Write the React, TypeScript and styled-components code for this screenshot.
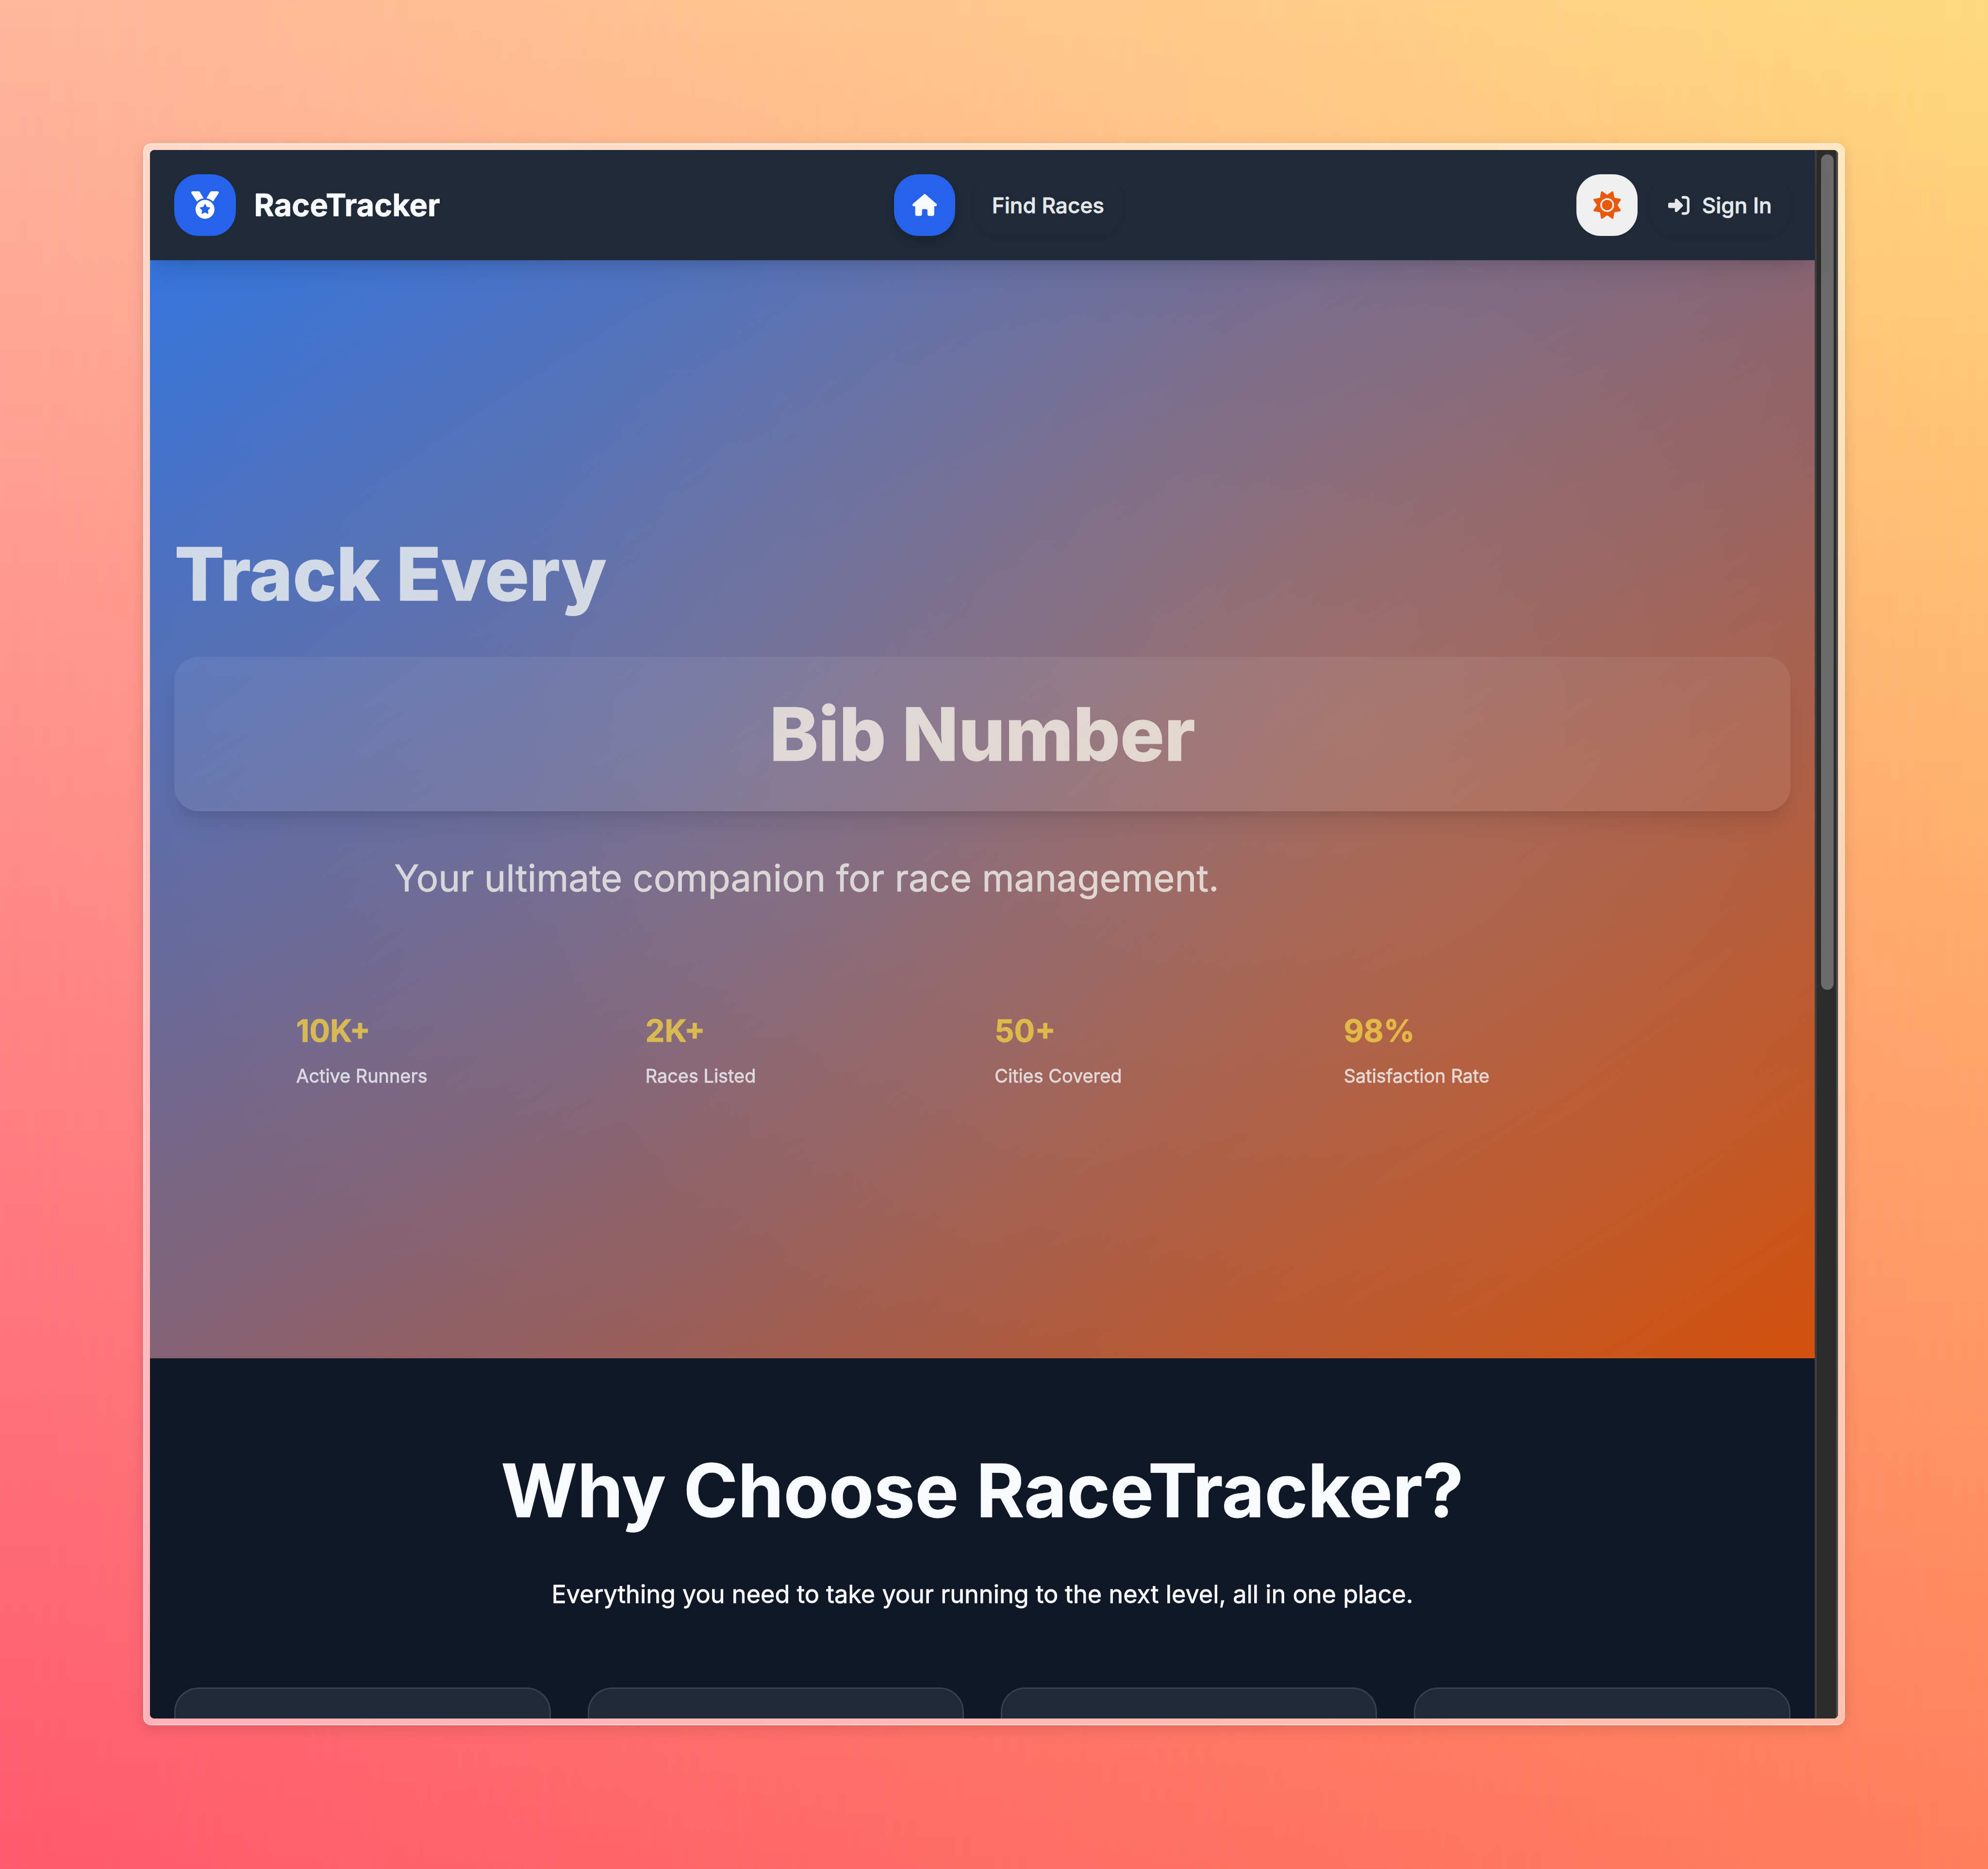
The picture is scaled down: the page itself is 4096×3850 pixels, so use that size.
import React from 'react';
import styled, { createGlobalStyle } from 'styled-components';
import { FaHouse, FaMedal, FaRightToBracket, FaSun } from 'react-icons/fa6';

const GlobalStyle = createGlobalStyle`
  *, *::before, *::after { box-sizing: border-box; }
  html { font-size: 50.49px; }
  body {
    margin: 0;
    font-family: Inter, "Liberation Sans", sans-serif;
    overflow: hidden;
    -webkit-text-stroke: 0.8px currentColor;
  }
  h1, h2, p { margin: 0; }
  svg { -webkit-text-stroke: 0; stroke-width: 0; }
`;

const Desktop = styled.main`
  position: relative;
  width: 4096px;
  height: 3850px;
  padding: 295px 295px 296px;
  background: linear-gradient(to bottom, #ffb79c 0%, #ff8788 50%, #ff5a6f 100%);
  isolation: isolate;

  &::before {
    content: '';
    position: absolute;
    inset: 0;
    z-index: -1;
    background: linear-gradient(to bottom, #ffd97f 0%, #ffab6c 50%, #ff7f5c 100%);
    mask-image: linear-gradient(to right, transparent, #000);
  }
`;

const WindowFrame = styled.div`
  height: 100%;
  padding: 12px;
  border: 2px solid rgba(255, 255, 255, 0.72);
  border-radius: 17px;
  background: rgba(255, 255, 255, 0.5);
  background-clip: padding-box;
  box-shadow: 0 7px 30px rgba(0, 0, 0, 0.12);
`;

const Viewport = styled.div`
  display: flex;
  height: 100%;
  overflow: hidden;
  border-radius: 9px;
  background: #111827;
`;

const Page = styled.div`
  flex: 1;
  min-width: 0;
  display: flex;
  flex-direction: column;
`;

const ScrollTrack = styled.div`
  width: 48px;
  flex: none;
  padding: 9px 0 0 9px;
  border-left: 4px solid #3e3e3e;
  border-right: 4px solid #4c4c4c;
  background: #2c2c2c;
`;

const ScrollThumb = styled.div`
  width: 26px;
  height: 1721px;
  border-radius: 13px;
  background: #6b6b6b;
`;

const Header = styled.header`
  position: relative;
  z-index: 1;
  flex: none;
  display: flex;
  align-items: center;
  justify-content: space-between;
  height: 4.5rem;
  padding: 0 1rem;
  background: #1f2937;
  box-shadow: 0 0.625rem 0.9375rem -0.1875rem rgba(0, 0, 0, 0.1),
    0 0.25rem 0.375rem -0.25rem rgba(0, 0, 0, 0.1);
`;

const Group = styled.div<{ $gap: string }>`
  display: flex;
  align-items: center;
  gap: ${({ $gap }) => $gap};
`;

const IconTile = styled.span<{ $bg: string; $fg: string; $size: string; $raised?: boolean }>`
  display: flex;
  align-items: center;
  justify-content: center;
  width: 2.5rem;
  height: 2.5rem;
  border-radius: 1rem;
  background: ${({ $bg }) => $bg};
  color: ${({ $fg }) => $fg};
  font-size: ${({ $size }) => $size};
  box-shadow: ${({ $raised }) =>
    $raised ? '0 0.25rem 0.375rem -0.0625rem rgba(0,0,0,0.1), 0 0.125rem 0.25rem -0.125rem rgba(0,0,0,0.1)' : 'none'};
`;

const Brand = styled.span`
  color: #f9fafb;
  font-size: 1.25rem;
  font-weight: 700;
  line-height: 1.75rem;
`;

const NavLink = styled.a`
  display: flex;
  align-items: center;
  gap: 0.5rem;
  height: 2.5rem;
  padding: 0 0.75rem;
  border-radius: 1rem;
  color: #e5e7eb;
  font-size: 0.875rem;
  font-weight: 500;
  box-shadow: 0 0.0625rem 0.125rem rgba(0, 0, 0, 0.03);
`;

const Hero = styled.section`
  flex: none;
  height: 44.8rem;
  padding: 10.925rem 1rem 0;
  background: radial-gradient(ellipse 40% 66% at 32% 42%, rgba(110, 185, 255, 0.12), rgba(110, 185, 255, 0.06) 50%, rgba(110, 185, 255, 0)),
    radial-gradient(ellipse 50% 80% at 72% 42%, rgba(255, 178, 100, 0.17), rgba(255, 178, 100, 0.08) 50%, rgba(255, 178, 100, 0)),
    linear-gradient(rgba(0, 0, 0, 0.1), rgba(0, 0, 0, 0.1)),
    linear-gradient(to bottom right, #3b82f6, #ea580c);
`;

const HeroTitle = styled.h1<{ $tone: string }>`
  color: ${({ $tone }) => $tone};
  font-size: 3rem;
  font-weight: 800;
  line-height: 3.75rem;
  opacity: 0.8;
`;

const TitleCard = styled.div`
  margin-top: 1.5rem;
  padding: 1.28rem 0;
  border-radius: 1rem;
  background: rgba(255, 255, 255, 0.07);
  text-align: center;
  box-shadow: 0 0.625rem 0.9375rem -0.1875rem rgba(0, 0, 0, 0.09),
    0 0.25rem 0.375rem -0.25rem rgba(0, 0, 0, 0.09);
`;

const Lead = styled.p`
  width: 48rem;
  margin: 1.5rem auto 0;
  color: rgb(242, 241, 237);
  font-size: 1.5rem;
  line-height: 2.4375rem;
  opacity: 0.8;
`;

const Stats = styled.div`
  display: grid;
  grid-template-columns: repeat(4, 1fr);
  gap: 1rem;
  width: 56rem;
  margin: 4.125rem auto 0;
`;

const StatValue = styled.div`
  color: rgb(240, 206, 70);
  font-size: 1.25rem;
  font-weight: 700;
  line-height: 1.75rem;
  opacity: 0.8;
`;

const StatLabel = styled.div`
  margin-top: 0.47rem;
  color: rgb(244, 246, 250);
  font-size: 0.75rem;
  line-height: 1rem;
  opacity: 0.8;
`;

const Features = styled.section`
  flex: 1;
  min-height: 0;
  padding: 3.89rem 1rem 0;
  background: #101726;
  overflow: hidden;
  text-align: center;
`;

const FeaturesTitle = styled.h2`
  color: #f9fafb;
  font-size: 3rem;
  font-weight: 700;
  line-height: 3rem;
`;

const FeaturesLead = styled.p`
  margin-top: 1.98rem;
  color: #f9fafb;
  font-size: 1rem;
  line-height: 1.5rem;
`;

const CardGrid = styled.div`
  display: grid;
  grid-template-columns: repeat(4, 1fr);
  gap: 1.5rem;
  margin-top: 3.05rem;
`;

const FeatureCard = styled.div`
  height: 16rem;
  border: 0.0625rem solid #374151;
  border-radius: 1rem;
  background: #1f2937;
`;

const stats = [
  { value: '10K+', label: 'Active Runners' },
  { value: '2K+', label: 'Races Listed' },
  { value: '50+', label: 'Cities Covered' },
  { value: '98%', label: 'Satisfaction Rate' },
];

const features = ['search', 'results', 'bibs', 'community'];

export default function App() {
  return (
    <>
      <GlobalStyle />
      <Desktop>
        <WindowFrame>
          <Viewport>
            <Page>
              <Header>
                <Group $gap="0.75rem">
                  <IconTile $bg="#2563eb" $fg="#ffffff" $size="1.125rem">
                    <FaMedal />
                  </IconTile>
                  <Brand>RaceTracker</Brand>
                </Group>
                <Group $gap="0.75rem">
                  <IconTile $bg="#2563eb" $fg="#f9fafb" $size="1rem" $raised>
                    <FaHouse />
                  </IconTile>
                  <NavLink>Find Races</NavLink>
                </Group>
                <Group $gap="0.5rem">
                  <IconTile $bg="#efefef" $fg="#ea580c" $size="1.125rem">
                    <FaSun />
                  </IconTile>
                  <NavLink>
                    <FaRightToBracket />
                    Sign In
                  </NavLink>
                </Group>
              </Header>
              <Hero>
                <HeroTitle $tone="rgb(241, 244, 241)">Track Every</HeroTitle>
                <TitleCard>
                  <HeroTitle as="div" $tone="rgb(245, 240, 231)">Bib Number</HeroTitle>
                </TitleCard>
                <Lead>Your ultimate companion for race management.</Lead>
                <Stats>
                  {stats.map((s) => (
                    <div key={s.label}>
                      <StatValue>{s.value}</StatValue>
                      <StatLabel>{s.label}</StatLabel>
                    </div>
                  ))}
                </Stats>
              </Hero>
              <Features>
                <FeaturesTitle>Why Choose RaceTracker?</FeaturesTitle>
                <FeaturesLead>
                  Everything you need to take your running to the next level, all in one place.
                </FeaturesLead>
                <CardGrid>
                  {features.map((f) => (
                    <FeatureCard key={f} />
                  ))}
                </CardGrid>
              </Features>
            </Page>
            <ScrollTrack>
              <ScrollThumb />
            </ScrollTrack>
          </Viewport>
        </WindowFrame>
      </Desktop>
    </>
  );
}
